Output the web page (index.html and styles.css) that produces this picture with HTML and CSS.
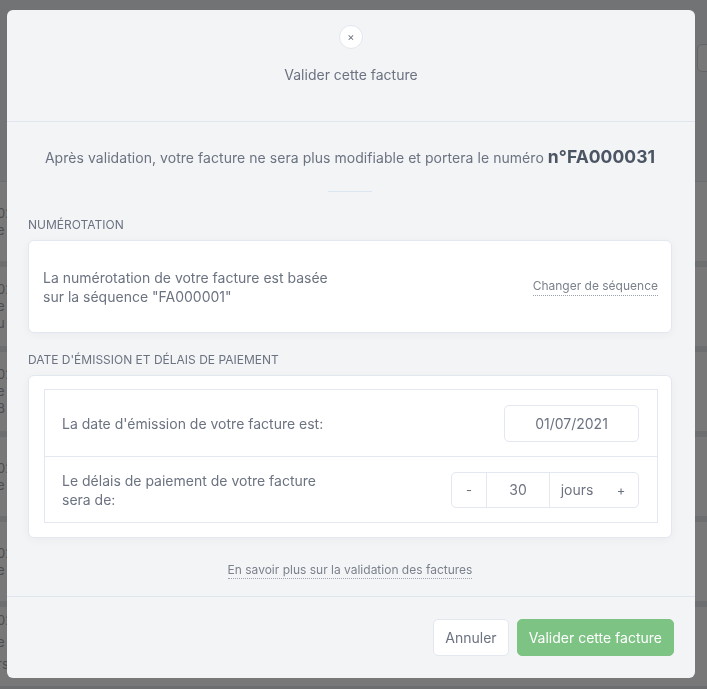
FILE: index.html
```html
<!DOCTYPE html>
<html lang="fr">
<head>
    <meta charset="UTF-8">
    <meta name="viewport" content="width=device-width, initial-scale=1.0">
    <title>Valider cette facture</title>
    <link rel="stylesheet" href="styles.css">
</head>
<body>
    <div class="page">
        <div class="page-toolbar"><span class="page-action"></span></div>
        <div class="page-row"><span>02/07</span><span>e</span></div>
        <div class="page-row"><span>02/07</span><span>e</span><span>u</span></div>
        <div class="page-row"><span>02/07</span><span>e</span><span>8</span></div>
        <div class="page-row"><span>02/07</span><span>e</span></div>
        <div class="page-row"><span>02/07</span><span>e</span></div>
        <div class="page-row page-row-last"><span>02/07</span><span>e</span><span>rs</span></div>
    </div>

    <div class="overlay">
        <div class="modal">
            <div class="modal-header">
                <button class="close-button" type="button">&times;</button>
                <h2 class="modal-title">Valider cette facture</h2>
            </div>

            <div class="modal-body">
                <p class="intro">Après validation, votre facture ne sera plus modifiable et portera le numéro <strong>n°FA000031</strong></p>
                <hr class="divider">

                <h3 class="section-label">Numérotation</h3>
                <div class="card card-numbering">
                    <p class="card-text">La numérotation de votre facture est basée sur la séquence "FA000001"</p>
                    <a class="dotted-link" href="#">Changer de séquence</a>
                </div>

                <h3 class="section-label">Date d'émission et délais de paiement</h3>
                <div class="card card-dates">
                    <div class="settings">
                        <div class="settings-row">
                            <p class="card-text">La date d'émission de votre facture est:</p>
                            <div class="date-input">01/07/2021</div>
                        </div>
                        <div class="settings-row">
                            <p class="card-text">Le délais de paiement de votre facture sera de:</p>
                            <div class="stepper">
                                <button class="stepper-btn" type="button">-</button>
                                <span class="stepper-value">30</span>
                                <span class="stepper-unit">jours</span>
                                <button class="stepper-btn" type="button">+</button>
                            </div>
                        </div>
                    </div>
                </div>

                <div class="help">
                    <a class="dotted-link" href="#">En savoir plus sur la validation des factures</a>
                </div>
            </div>

            <div class="modal-footer">
                <button class="btn btn-light" type="button">Annuler</button>
                <button class="btn btn-success" type="button">Valider cette facture</button>
            </div>
        </div>
    </div>
</body>
</html>
```

FILE: styles.css
```css
* {
    box-sizing: border-box;
    margin: 0;
    padding: 0;
}

body {
    font-family: 'Inter', 'Noto Sans', sans-serif;
    background: #f3f4f6;
    color: #6b7280;
    height: 689px;
    overflow: hidden;
}

/* app page behind the overlay */
.page {
    padding-top: 30px;
}

.page-toolbar {
    height: 152px;
    border-bottom: 1px solid #e5e7eb;
    display: flex;
    justify-content: flex-end;
    padding: 14px 0 0;
}

.page-action {
    width: 40px;
    height: 28px;
    margin-right: -30px;
    border: 1px solid #d1d5db;
    border-radius: 5px;
    background: #fff;
}

.page-row {
    height: 85px;
    display: flex;
    flex-direction: column;
    justify-content: center;
    border-bottom: 6px solid #e8e9ec;
    background: #fff;
    font-size: 13px;
    line-height: 17px;
    text-indent: -3px;
    color: #a3a7ae;
}

.page-row-last {
    line-height: 22px;
    justify-content: flex-start;
    padding-top: 2px;
}

.overlay {
    position: fixed;
    inset: 0;
    background: rgba(0, 0, 0, 0.53);
    padding: 10px 12px 11px 7px;
}

.modal {
    height: 100%;
    background: #f3f4f6;
    border-radius: 6px;
    display: flex;
    flex-direction: column;
    overflow: hidden;
}

.modal-header {
    display: flex;
    flex-direction: column;
    align-items: center;
    padding: 15px 0 36px;
    border-bottom: 1px solid #dfe5ee;
}

.close-button {
    width: 24px;
    height: 24px;
    border-radius: 50%;
    border: 1px solid #e2e6ef;
    background: #fff;
    color: #6b7280;
    font-family: 'Inter', sans-serif;
    font-size: 11px;
    line-height: 20px;
}

.modal-title {
    margin-top: 16px;
    font-size: 14px;
    font-weight: 400;
    line-height: 20px;
    color: #6b7280;
}

.modal-body {
    flex: 1;
    padding: 23px 23px 0 21px;
    border-bottom: 1px solid #dfe5ee;
}

.intro {
    text-align: center;
    font-size: 14px;
    line-height: 24px;
    letter-spacing: 0.05px;
    color: #6b7280;
}

.intro strong {
    font-size: 17.5px;
    font-weight: 700;
    color: #4b5563;
}

.divider {
    width: 44px;
    margin: 21px auto 0;
    border: none;
    border-top: 1px solid #dce5f2;
}

.section-label {
    margin-top: 25px;
    font-size: 12px;
    font-weight: 400;
    line-height: 16px;
    text-transform: uppercase;
    color: #6b7280;
}

.section-label + .card {
    margin-top: 7px;
}

.card + .section-label {
    margin-top: 19px;
}

.card {
    background: #fff;
    border: 1px solid #e3e7ef;
    border-radius: 6px;
    box-shadow: 0 2px 10px rgba(17, 24, 39, 0.04);
}

.card-text {
    max-width: 48%;
    font-size: 14px;
    line-height: 19px;
    color: #6b7280;
}

.card-numbering {
    display: flex;
    justify-content: space-between;
    align-items: center;
    padding: 27px 13px 26px 14px;
}

.dotted-link {
    font-size: 12px;
    line-height: 16px;
    color: #7b818c;
    text-decoration: none;
    border-bottom: 1px dotted #9ca3af;
    padding-bottom: 1px;
}

.card-dates {
    padding: 13px 13px 14px 15px;
}

.settings {
    border: 1px solid #e3e7ef;
}

.settings-row {
    display: flex;
    justify-content: space-between;
    align-items: center;
    min-height: 66px;
    padding: 0 18px 0 17px;
}

.settings-row + .settings-row {
    border-top: 1px solid #e3e7ef;
}

.date-input {
    width: 135px;
    height: 37px;
    border: 1px solid #e3e7ef;
    border-radius: 5px;
    text-align: center;
    font-size: 14px;
    line-height: 35px;
    color: #6b7280;
}

.stepper {
    display: flex;
    height: 36px;
    border: 1px solid #e3e7ef;
    border-radius: 5px;
    font-size: 14px;
    line-height: 34px;
    color: #6b7280;
}

.stepper > * {
    text-align: center;
}

.stepper > * + * {
    border-left: 1px solid #e3e7ef;
}

.stepper-btn {
    width: 34px;
    border: none;
    background: transparent;
    font-family: 'Inter', sans-serif;
    font-size: 13px;
    color: #6b7280;
}

.stepper-value {
    width: 63px;
}

.stepper-unit {
    width: 55px;
}

.help {
    text-align: center;
    margin-top: 20px;
}

.modal-footer {
    display: flex;
    justify-content: flex-end;
    gap: 8px;
    padding: 22px 21px 22px;
}

.btn {
    height: 37px;
    padding: 0 11px;
    border-radius: 5px;
    font-family: 'Inter', sans-serif;
    font-size: 14px;
    cursor: pointer;
}

.btn-light {
    background: #fff;
    border: 1px solid #e3e7ef;
    color: #6b7280;
}

.btn-success {
    background: #7dc383;
    border: 1px solid #7dc383;
    color: #fff;
}
```
